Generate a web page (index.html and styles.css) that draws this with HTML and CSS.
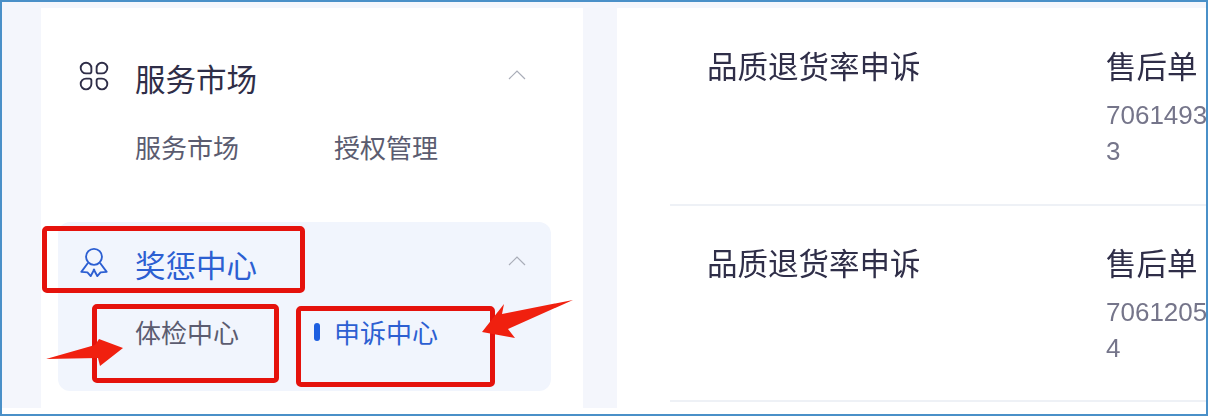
FILE: index.html
```html
<!DOCTYPE html>
<html lang="zh-CN">
<head>
    <meta charset="UTF-8">
    <meta name="viewport" content="width=device-width, initial-scale=1.0">
    <title>奖惩中心</title>
    <link rel="stylesheet" href="styles.css">
</head>
<body>
    <div class="page">
        <div class="content">
            <div class="sidebar">
                <div class="menu-group">
                    <div class="menu-header">
                        <svg class="menu-icon" viewBox="0 0 32 32" fill="none" stroke="currentColor" stroke-width="2">
                            <path d="M7.500 13.200A5.700 5.700 0 1 1 13.200 7.500v3.700a2 2 0 0 1-2 2z"/>
                            <path transform="matrix(-1 0 0 1 32 0)" d="M7.500 13.200A5.700 5.700 0 1 1 13.200 7.500v3.700a2 2 0 0 1-2 2z"/>
                            <path transform="matrix(1 0 0 -1 0 32)" d="M7.500 13.200A5.700 5.700 0 1 1 13.200 7.500v3.700a2 2 0 0 1-2 2z"/>
                            <path transform="matrix(-1 0 0 -1 32 32)" d="M7.500 13.200A5.700 5.700 0 1 1 13.200 7.500v3.700a2 2 0 0 1-2 2z"/>
                        </svg>
                        <span class="menu-title">服务市场</span>
                        <svg class="chevron" viewBox="0 0 18 10" fill="none" stroke="currentColor" stroke-width="1.200"><path d="M1 9l8-8 8 8"/></svg>
                    </div>
                    <div class="menu-items">
                        <span class="menu-item">服务市场</span>
                        <span class="menu-item">授权管理</span>
                    </div>
                </div>

                <div class="menu-group menu-group-active">
                    <div class="menu-header">
                        <svg class="menu-icon" viewBox="0 0 32 32" fill="none" stroke="currentColor" stroke-width="2" stroke-linejoin="round">
                            <circle cx="16" cy="10.500" r="8.500"/>
                            <path d="M9.500 17L2.500 26.500l6.500.5 3.500 4 4-7.500"/>
                            <path d="M22.500 17l7 9.500-6.500.5-3.500 4-4-7.500"/>
                        </svg>
                        <span class="menu-title">奖惩中心</span>
                        <svg class="chevron" viewBox="0 0 18 10" fill="none" stroke="currentColor" stroke-width="1.200"><path d="M1 9l8-8 8 8"/></svg>
                    </div>
                    <div class="menu-items">
                        <span class="menu-item">体检中心</span>
                        <span class="menu-item menu-item-current">申诉中心</span>
                    </div>
                </div>
            </div>

            <div class="main">
                <div class="row">
                    <div class="cell-type">品质退货率申诉</div>
                    <div class="cell-order">
                        <div class="order-title">售后单</div>
                        <div class="order-number">70614933</div>
                    </div>
                </div>
                <div class="row">
                    <div class="cell-type">品质退货率申诉</div>
                    <div class="cell-order">
                        <div class="order-title">售后单</div>
                        <div class="order-number">70612054</div>
                    </div>
                </div>
            </div>
        </div>

        <!-- red annotations on top of the screenshot -->
        <div class="mark mark-title"></div>
        <div class="mark mark-check"></div>
        <div class="mark mark-appeal"></div>
        <svg class="arrow arrow-left" viewBox="0 0 82 32"><path d="M2 23L51 9 55 3 79 12 56 30 54 22z"/></svg>
        <svg class="arrow arrow-right" viewBox="0 0 96 42"><path d="M93 2L22 16 24 6 2 34 35 40 28 31z"/></svg>
    </div>
</body>
</html>
```

FILE: styles.css
```css
* {
    box-sizing: border-box;
}
body {
    margin: 0;
    font-family: "Noto Sans CJK SC", "Liberation Sans", sans-serif;
    color: #2f2e48;
}
.page {
    position: relative;
    width: 1208px;
    height: 416px;
    padding-bottom: 6px;
    overflow: hidden;
    background-color: #fff;
    border: 2px solid #4a90c8;
}
.content {
    display: flex;
    height: 100%;
    padding: 6px 0 0 39px;
    background-color: #f4f6fc;
    filter: blur(0.4px);
}
.sidebar {
    width: 542px;
    padding: 0 32px 0 17px;
    background-color: #fff;
}
.menu-group {
    height: 214px;
    padding-top: 50px;
    border-radius: 12px;
}
.menu-group-active {
    height: 169px;
    padding-top: 22px;
    background-color: #f1f5fd;
}
.menu-header {
    display: flex;
    align-items: center;
    height: 40px;
    padding-left: 21px;
}
.menu-icon {
    width: 30px;
    height: 30px;
    margin-right: 26px;
    margin-bottom: 4px;
}
.menu-title {
    flex: 1;
    font-size: 30.500px;
    line-height: 40px;
}
.chevron {
    width: 18px;
    height: 10px;
    margin-right: 25px;
    margin-bottom: 7px;
    color: #a9adb8;
}
.menu-items {
    display: flex;
    gap: 95px;
    padding: 31px 0 0 77px;
}
.menu-item {
    position: relative;
    font-size: 26px;
    line-height: 36px;
    color: #5b5c70;
}
.menu-group-active .menu-header {
    color: #2c5fd2;
}
.menu-group-active .menu-items {
    padding-top: 30px;
}
.menu-item-current {
    color: #2c5fd2;
}
.menu-item-current::before {
    content: "";
    position: absolute;
    left: -20px;
    top: 9px;
    width: 6px;
    height: 18px;
    border-radius: 3px;
    background-color: #1d5fe0;
}
.main {
    width: 589px;
    margin-left: 34px;
    padding-left: 53px;
    background-color: #fff;
}
.row {
    display: flex;
    height: 198px;
    padding: 34px 0 0 37px;
    border-bottom: 2px solid #eef1f6;
}
.row:last-child {
    height: 196px;
    padding-top: 33px;
}
.cell-type {
    flex: none;
    width: 399px;
    font-size: 30.500px;
    line-height: 46px;
}
.cell-order {
    flex: none;
    width: 110px;
}
.order-title {
    font-size: 30.500px;
    line-height: 46px;
    white-space: nowrap;
}
.order-number {
    margin-top: 9px;
    font-family: "Liberation Sans", sans-serif;
    font-size: 26px;
    line-height: 36px;
    color: #75758a;
    word-break: break-all;
}
.mark {
    position: absolute;
    border: 5px solid #e5120c;
    border-radius: 5px;
}
.mark-title {
    left: 40px;
    top: 224px;
    width: 263px;
    height: 67px;
}
.mark-check {
    left: 90px;
    top: 302px;
    width: 187px;
    height: 79px;
}
.mark-appeal {
    left: 294px;
    top: 304px;
    width: 199px;
    height: 81px;
}
.arrow {
    position: absolute;
    fill: #f0200f;
}
.arrow-left {
    left: 42px;
    top: 334px;
    width: 82px;
    height: 32px;
}
.arrow-right {
    left: 478px;
    top: 296px;
    width: 96px;
    height: 42px;
}
```
